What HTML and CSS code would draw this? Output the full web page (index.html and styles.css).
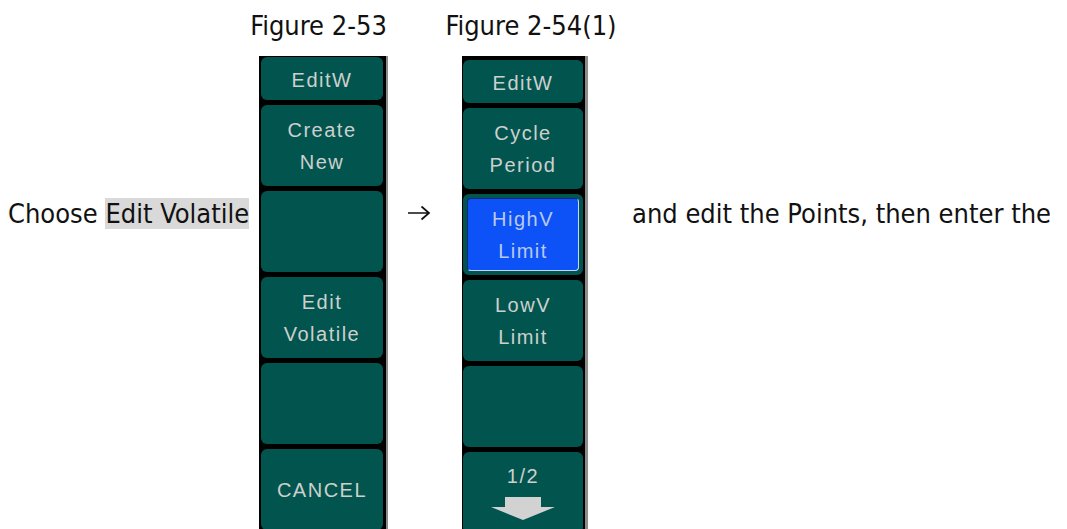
FILE: index.html
```html
<!DOCTYPE html>
<html lang="en">

<head>
    <meta charset="UTF-8">
    <title>Edit Volatile</title>
    <link rel="stylesheet" href="styles.css">
</head>

<body>
    <div class="page">
        <div class="caption cap-first">Figure 2-53</div>
        <div class="caption cap-second">Figure 2-54(1)</div>

        <div class="lead">Choose <span class="mark">Edit Volatile</span></div>

        <div class="menu menu-one">
            <div class="key head">EditW</div>
            <div class="key">Create<br>New</div>
            <div class="key"></div>
            <div class="key">Edit<br>Volatile</div>
            <div class="key"></div>
            <div class="key">CANCEL</div>
        </div>

        <div class="arrow">
            <svg width="24" height="16" viewBox="0 0 24 16">
                <path d="M1 8H22M14.5 1.5L22 8L14.5 14.5" fill="none" stroke="#111" stroke-width="1.7" />
            </svg>
        </div>

        <div class="menu menu-two">
            <div class="key head">EditW</div>
            <div class="key">Cycle<br>Period</div>
            <div class="key active">
                <div class="inner">HighV<br>Limit</div>
            </div>
            <div class="key">LowV<br>Limit</div>
            <div class="key"></div>
            <div class="key page-key">
                <span>1/2</span>
                <svg width="64" height="24" viewBox="0 0 64 24">
                    <polygon points="14,0 50,0 50,10 64,10 32,23 0,10 14,10" fill="#d2d2d2" />
                </svg>
            </div>
        </div>

        <div class="tail">and edit the Points, then enter the</div>
    </div>
</body>

</html>
```

FILE: styles.css
```css
html,
body {
    margin: 0;
    height: 529px;
    overflow: hidden;
    background: #fff;
}

body {
    font-family: "DejaVu Sans Condensed", "DejaVu Sans", sans-serif;
    font-stretch: condensed;
    font-size: 27px;
    color: #111;
}

.page {
    display: grid;
    grid-template-columns: 259px 129px 74px 126px 1fr;
    grid-template-rows: auto auto;
    row-gap: 15px;
    padding-top: 10px;
}

.caption {
    grid-row: 1;
    white-space: nowrap;
    justify-self: center;
}

.cap-first {
    grid-column: 2;
    margin-right: 10px;
}

.cap-second {
    grid-column: 4;
    margin-left: 12px;
}

.lead {
    grid-row: 2;
    grid-column: 1;
    padding: 142px 0 0 8px;
    white-space: nowrap;
}

.mark {
    background: #d9d9d9;
}

.arrow {
    grid-row: 2;
    grid-column: 3;
    padding: 149px 0 0 19px;
}

.arrow svg {
    display: block;
}

.tail {
    grid-row: 2;
    grid-column: 5;
    padding: 142px 0 0 44px;
    white-space: nowrap;
}

/* soft-key menus */
.menu {
    grid-row: 2;
    display: flex;
    flex-direction: column;
    gap: 5px;
    background: #000;
    border-right: 2px solid #8c8c8c;
    font-family: "Liberation Sans", Arial, sans-serif;
    font-stretch: normal;
    font-size: 20px;
    letter-spacing: 1.5px;
    line-height: 32px;
    color: #cdd0cd;
}

.menu-one {
    grid-column: 2;
    padding: 1px 3px 0 2px;
}

.menu-two {
    grid-column: 4;
    padding: 4px 2px 0 1px;
    border-right-width: 3px;
}

.key {
    height: 81px;
    flex: none;
    display: flex;
    flex-direction: column;
    align-items: center;
    justify-content: center;
    text-align: center;
    background: #02554f;
    border-radius: 6px;
}

.key.head {
    height: 43px;
    padding-top: 3px;
    box-sizing: border-box;
}

.key.active {
    padding: 4px;
    box-sizing: border-box;
    align-items: stretch;
}

.inner {
    flex: 1;
    display: flex;
    align-items: center;
    justify-content: center;
    background: #0d52f6;
    border: 1px solid #0b2a7a;
    border-right-color: #c6d6ff;
    border-bottom-color: #c6d6ff;
    border-radius: 4px;
    color: #b9c9ee;
}

.page-key {
    justify-content: flex-start;
    padding-top: 8px;
    box-sizing: border-box;
}

.page-key svg {
    display: block;
    margin-top: 5px;
}
```
